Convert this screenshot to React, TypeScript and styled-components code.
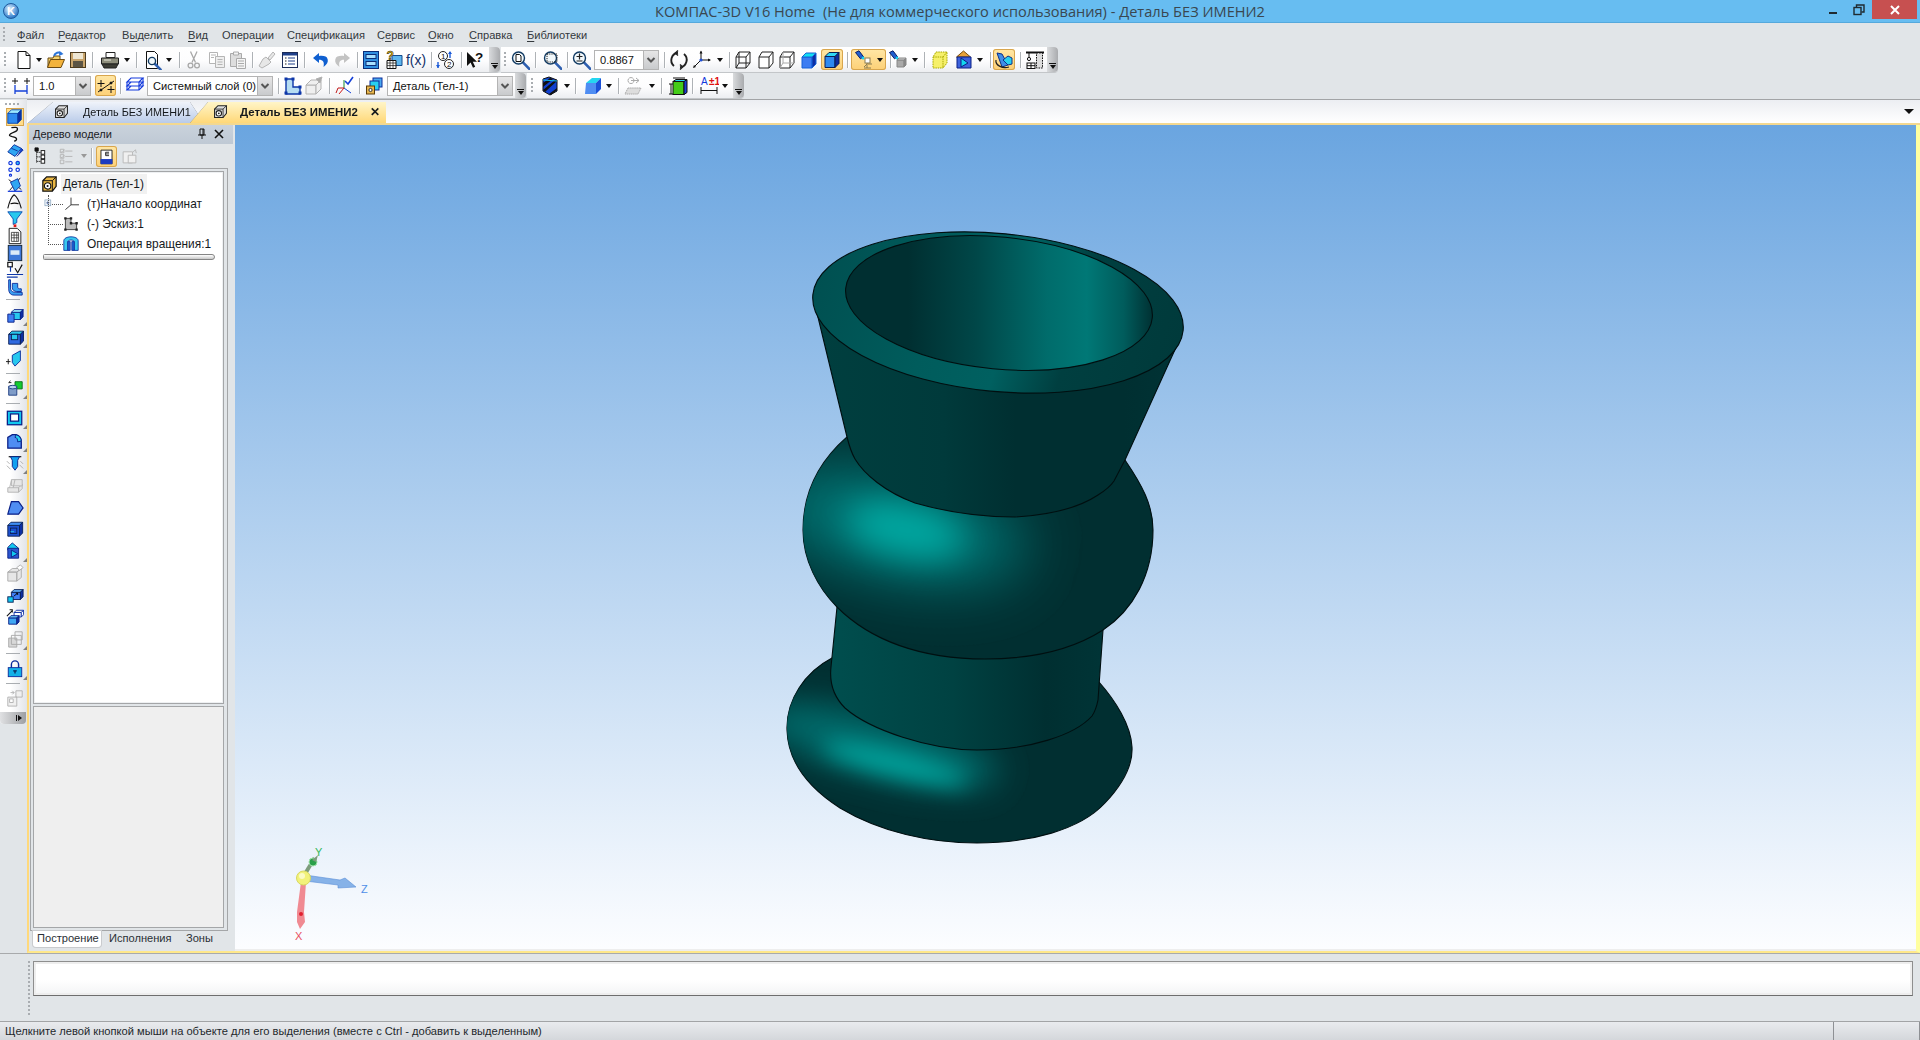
import React from "react";
import styled, { createGlobalStyle } from "styled-components";

const Global = createGlobalStyle`
  html, body { margin: 0; padding: 0; width: 1920px; height: 1040px; overflow: hidden; background: #e1e5e8; }
  body { font-family: "Liberation Sans", Arial, sans-serif; color: #1a1a1a; }
  * { box-sizing: border-box; }
`;

const cube = (x: number, y: number, w: number, h: number, d: number, f: string, t: string, s: string, st = "#000") => (
  <g stroke={st} strokeWidth="1" strokeLinejoin="round">
    <path d={`M${x} ${y}h${w}v${h}h${-w}z`} fill={f} />
    <path d={`M${x} ${y}l${d} ${-d}h${w}l${-d} ${d}z`} fill={t} />
    <path d={`M${x + w} ${y}l${d} ${-d}v${h}l${-d} ${d}z`} fill={s} />
  </g>
);
const lens = (cx: number, cy: number, r: number) => (
  <g>
    <path d={`M${cx + r * 0.7} ${cy + r * 0.7}L${cx + r + 5} ${cy + r + 5}`} stroke="#2e5fb0" strokeWidth="2.6" strokeLinecap="round" />
    <circle cx={cx} cy={cy} r={r} fill="#f2f8fb" stroke="#123b63" strokeWidth="1.4" />
  </g>
);

const icons: Record<string, React.ReactNode> = {
  doc: <path d="M4 1.5h8l4 4v13H4z M12 1.5v4h4" fill="#fff" stroke="#111" strokeWidth="1" />,
  open: <g stroke="#6b4a12"><path d="M2 8h5l1-2h6v4H5L2 17z" fill="#f6d36c" /><path d="M4.5 9.5h14l-3.5 8H1.5z" fill="#f3b33c" /><path d="M8 6C9 2.5 13 1.5 15 3.5" fill="none" stroke="#2b74d8" strokeWidth="2" /><path d="M13.5 1l4 3-4.5 2z" fill="#2b74d8" stroke="none" /></g>,
  save: <g><rect x="2.5" y="2.5" width="15" height="15" fill="#c9a56d" stroke="#4d3c1f" /><rect x="5" y="3" width="10" height="6" fill="#efe7d3" /><rect x="5" y="11" width="10" height="6" fill="#5b5444" /></g>,
  print: <g stroke="#222"><path d="M6 2.5h9v5H6z" fill="#fff" /><path d="M1.5 8h17v6h-17z" fill="#8d8d7c" /><path d="M2 14h16l-2 4H4z" fill="#3d3d36" /><path d="M4 10h7" stroke="#e7e7da" /></g>,
  preview: <g><path d="M3.5 1.5h8l3 3v14h-11z" fill="#fff" stroke="#111" />{lens(9, 11, 3.6)}</g>,
  cut: <g fill="none" stroke="#a8a8a8" strokeWidth="1.3"><path d="M6.5 1.5l5 11M13 1.5l-5 11" /><circle cx="6.5" cy="15.5" r="2.4" /><circle cx="13" cy="15.5" r="2.4" /></g>,
  copy: <g fill="#fff" stroke="#b5b5b5"><path d="M2.5 2.5h8v11h-8z" /><path d="M8.5 6.5h9v11h-9z" fill="#eee" /><path d="M10.5 9.5h5M10.5 12h5M10.5 14.5h5M4 5h5M4 7.5h3" /></g>,
  paste: <g stroke="#aaa"><path d="M2.5 3.5h11v13h-11z" fill="#ddd" /><path d="M5.5 2h5v3h-5z" fill="#f3f3f3" /><path d="M8.5 8.5h9v10h-9z" fill="#f4f4f4" /><path d="M10 11h6M10 13.5h6M10 16h6" /></g>,
  brush: <g stroke="#b5b5b5" fill="#e7e7e7"><path d="M11 8l5-6 2 2-5 6z" /><path d="M9 7l5 5-2 2-7 4-3-2 4-7z" /></g>,
  list: <g><rect x="2.5" y="2.5" width="15" height="15" fill="#fff" stroke="#1c2c58" /><rect x="3" y="3" width="14" height="2.5" fill="#1e3f8a" /><path d="M5 8h1.5M5 11h1.5M5 14h1.5" stroke="#222" /><path d="M8 8h7M8 11h7M8 14h7" stroke="#1e3f8a" /></g>,
  undo: <g><path d="M8 3l-6 5 6 5V9.8c4 0 5.6 2 4.5 7.2 3.6-2.6 4.8-5 4.2-7.5C16 6 12.4 5.6 8 6z" fill="#0f5fd0" /></g>,
  redo: <g transform="matrix(-1 0 0 1 20 0)"><path d="M8 3l-6 5 6 5V9.8c4 0 5.6 2 4.5 7.2 3.6-2.6 4.8-5 4.2-7.5C16 6 12.4 5.6 8 6z" fill="#c3c3c3" /></g>,
  mgr: <g stroke="#0b2c78"><rect x="2.5" y="1.5" width="15" height="17" fill="#2f8ee0" /><rect x="5" y="4.5" width="10" height="4" fill="#a8e0ff" /><rect x="5" y="11.5" width="10" height="4" fill="#a8e0ff" /></g>,
  lib: <g><path d="M8 5.5h10v10H8z" fill="#5fb6ee" stroke="#124a8c" /><path d="M3 10.5h9v8H3z" fill="#fff" stroke="#111" /><path d="M3 13h9M3 15.6h9M6 10.5v8M9 10.5v8" stroke="#111" strokeWidth=".7" /><text x="2.5" y="10" fontFamily="Liberation Sans" fontWeight="700" fontSize="12" fill="#f2c200" stroke="#222" strokeWidth=".5">?</text></g>,
  fx: <text x="0" y="15" fontFamily="Liberation Sans" fontSize="14.5" textLength="20" lengthAdjust="spacingAndGlyphs" fill="#123068">f(x)</text>,
  num: <g fontFamily="Liberation Sans" fontSize="8" fill="#111"><circle cx="7" cy="6" r="4.5" fill="#fff" stroke="#222" /><circle cx="13" cy="14" r="4.5" fill="#fff" stroke="#222" /><text x="5" y="9">1</text><text x="11" y="17">2</text><path d="M14 2v6M2 12v6" stroke="#1c5bd8" strokeWidth="1.4" /><path d="M12 4l2-3 2 3zM0 15l2 3 2-3z" fill="#1c5bd8" /></g>,
  help: <g><path d="M2 2v14l3.6-3.4 2.4 5.2 2.2-1-2.4-5H12z" fill="#111" /><text x="10" y="11.5" fontFamily="Liberation Sans" fontWeight="700" fontSize="13.5" fill="#111">?</text></g>,
  zoomPage: <g>{lens(8.5, 8, 6)}<path d="M6 4.5h3.5l1.5 1.5v5.5H6z" fill="#fff" stroke="#111" /></g>,
  zoomBox: <g>{lens(8.5, 8, 6)}<rect x="5" y="4" width="10" height="8" fill="none" stroke="#222" strokeDasharray="1.2 1" /></g>,
  zoomIn: <g>{lens(8.5, 8, 6)}<path d="M5.5 6.5h6M8.5 3.5v6M5.5 11h6" stroke="#222" strokeWidth="1.2" /></g>,
  rotate: <g fill="none" stroke="#222" strokeWidth="1.9"><path d="M9 2.8A7.5 7.5 0 0 0 5 16" /><path d="M11 17.2A7.5 7.5 0 0 0 15 4" /><path d="M9 .6l-2.6 2.4L9 5.4M11 19.4l2.6-2.4L11 14.6" strokeWidth="1.4" /></g>,
  orient: <g stroke="#111" fill="#111"><path d="M9 10V1.5M9 10h9M9 10l-7 7" fill="none" /><path d="M7.5 3.5L9 .5l1.5 3zM16 8.5l3 1.5-3 1.5zM1 18l1-3 2 2z" stroke="none" /><circle cx="9" cy="10" r="1.6" fill="#1c4ed8" stroke="none" /></g>,
  wire: <g fill="none" stroke="#222"><path d="M6 2h11v11l-4 5H3V7z" /><path d="M3 7h10v11M13 7l4-5" /><path d="M6 2v11l-3 5M6 13h11" /></g>,
  hidden: <g fill="#fff" stroke="#222"><path d="M6 2h11v11l-4 5H3V7z" /><path d="M3 7h10v11M13 7l4-5" fill="none" /></g>,
  thin: <g fill="#fff" stroke="#222"><path d="M6 2h11v11l-4 5H3V7z" /><path d="M3 7h10v11M13 7l4-5" fill="none" /><path d="M6 2v11l-3 5M6 13h11" fill="none" stroke="#aaa" /></g>,
  solid: cube(3, 7, 10, 11, 4, "#3d7df2", "#13e0f2", "#0d2fa5", "#1763d8"),
  shaded: cube(3, 6.5, 10, 11, 4, "#2f8af0", "#30d8f5", "#0e2ca0", "#0a1f55"),
  lamp: <g><path d="M1.5 2.5L5 .8l4.5 6-3 2z" fill="#1f5fd0" stroke="#0c1f66" /><circle cx="9" cy="8" r="1.5" fill="#16d0f0" /><path d="M10 17l3-3v-3M13 14l5 0M13 15v3M10 18h7" stroke="#8b7d52" fill="none" /><rect x="11" y="8" width="5" height="5" fill="#fff" stroke="#8b7d52" /></g>,
  lamp2: <g><path d="M1.5 2.5L5 .8l4.5 6-3 2z" fill="#1f5fd0" stroke="#0c1f66" /><circle cx="9" cy="8" r="1.5" fill="#16d0f0" />{cube(9, 10, 7, 7, 2, "#aaa", "#ccc", "#888", "#888")}</g>,
  ybox: <g fill="#f6f06a" stroke="#a8a800" strokeDasharray="1.5 .8"><path d="M6 2h11v11l-4 5H3V7z" /><path d="M3 7h10v11M13 7l4-5" fill="none" /></g>,
  section: <g><path d="M9.5 1l7 6H2.5z" fill="#e8a33a" stroke="#7a4d0a" /><path d="M3 7h14v11H3z" fill="#3c62dd" stroke="#0a1f86" /><path d="M7 8l7 5-7 4z" fill="#12d6ef" stroke="#0a1f86" /></g>,
  shadow: <g><path d="M3 3l5 1 6 11-6 2z" fill="#3f8de8" stroke="#0c2f8a" /><path d="M9 10l5-4 4 2v6l-4 1z" fill="#28d0f0" stroke="#0c2f8a" /><path d="M2 10c-1 5 6 9 13 7" fill="none" stroke="#222" strokeWidth="1.2" /></g>,
  crane: <g stroke="#111" fill="none"><path d="M1 2.5h18" strokeWidth="2" /><path d="M11.5 3h6v15h-6z" fill="#ddd" strokeDasharray="1.6 1" /><path d="M4 3v4" /><circle cx="4" cy="9" r="1.6" /><rect x="2" y="13" width="8" height="5.5" fill="#fff" /><path d="M2 15.7h8M6 13v5.5" /></g>,
  dims: <g stroke="#111"><path d="M4 2v6M1 5h6M16 2v6M13 5h6" /><path d="M4 9v9M16 9v9M4 15h12" stroke="#1440d8" strokeWidth="1.3" /></g>,
  snap: <g stroke="#111"><path d="M2 16L18 5" /><path d="M5 4v7M1.5 7.5h7M15 10v7M11.5 13.5h7" /><circle cx="5" cy="14" r="1" fill="#111" /><circle cx="15" cy="7" r="1" fill="#111" /></g>,
  layers: <g fill="none" stroke="#1238dc" strokeWidth="1.1"><path d="M6 2h12l-4 4H2zM6 6h12l-4 4H2zM6 10h12l-4 4H2z" /><path d="M2 6v8M14 6v8M18 2v8" /></g>,
  sketch: <g><path d="M3 3h7v8h7v7H3z" fill="#b6ddf2" stroke="#0d36a8" strokeWidth="1.4" /><path d="M1.5 1.5h3v3h-3zM8.5 1.5h3v3h-3zM1.5 15.5h3v3h-3zM15.5 15.5h3v3h-3zM15.5 9.5h3v3h-3z" fill="#0d36a8" /></g>,
  partG: <g stroke="#b2b2b2" fill="#efefef"><path d="M2 9h10v9H2z" /><path d="M2 9l5-5h10l-5 5zM12 9l5-5v9l-5 5z" /><path d="M12 3l6-2-2 6z" fill="#aaa" /></g>,
  axes: <g fill="none"><path d="M9 12V4" stroke="#188a2a" /><path d="M9 12H3l-2 5" stroke="#c01818" /><path d="M9 12l7 5" stroke="#1440d8" /><path d="M9 12l-5 6" stroke="#d01818" /><path d="M10 5l3 3 5-7" stroke="#1440d8" strokeWidth="1.6" /></g>,
  parts: <g><rect x="8" y="2" width="9" height="9" fill="#4aa8f0" stroke="#0b2c9a" /><rect x="5" y="5" width="9" height="9" fill="#28d0f0" stroke="#0b2c9a" /><rect x="1.5" y="10" width="8" height="8" fill="#e7b650" stroke="#5a3a06" /><circle cx="5.5" cy="14" r="1.6" fill="#fff" stroke="#333" /></g>,
  striped: <g><path d="M3 3l6-2 8 3v11l-7 4-7-4z" fill="#1040d0" stroke="#111" /><path d="M3 7l7-5 3 1-10 8zM3 14L15 4l2 1L5 16zM9 18l8-6v2l-6 5z" fill="#111" /><path d="M3 4l14 1" stroke="#18b8e8" /></g>,
  blueBox: <g><path d="M3 7l6-5h9l-5 5z" fill="#24d6f0" /><path d="M3 7h10v11H2z" fill="#4f8df2" /><path d="M13 7l5-5v11l-5 5z" fill="#1a50d8" /></g>,
  grayOp: <g stroke="#aaa" fill="none"><path d="M5 4.5a3 3 0 1 1 0 .1M8 4.5h8M13 2l3 2.5-3 2.5" /><path d="M5 12h13l-3 6H2z" fill="#ddd" strokeDasharray="1.5 .6" /></g>,
  green: <g><rect x="5" y="5.5" width="11" height="13" fill="#44cc18" stroke="#111" /><path d="M16 5.5l3-2v13l-3 2z" fill="#1c3dd8" stroke="#111" /><path d="M5 5.5l3-2h11l-3 2z" fill="#24d6f0" stroke="#111" /><path d="M5 2h12M1 8h4M1 18h4M3 8v10" stroke="#111" /></g>,
  adim: <g><text x="2" y="9" fontFamily="Liberation Sans" fontSize="10" fill="#1238dc">A</text><text x="10" y="9" fontFamily="Liberation Sans" fontSize="10" fontWeight="700" fill="#e01010">±1</text><path d="M2 11v7M18 11v7M2 14.5h16" stroke="#111" /></g>,
  part: <g><path d="M3 6l4-4h10v10l-4 5H3z" fill="#e9b642" stroke="#111" strokeWidth="1.3" /><path d="M3 6h10v11" fill="none" stroke="#111" /><path d="M13 6l4-4" stroke="#111" /><circle cx="8" cy="11.5" r="3.4" fill="#fff" stroke="#111" strokeWidth="1.2" /><circle cx="8" cy="11.5" r="1.1" fill="#111" /></g>,
  partBw: <g><path d="M3 6l4-4h10v9l-4 5H3z" fill="#ddd" stroke="#222" strokeWidth="1.2" /><path d="M3 6h10v10M13 6l4-4" fill="none" stroke="#222" /><circle cx="8" cy="11" r="3.2" fill="#fff" stroke="#222" strokeWidth="1.3" /><circle cx="8" cy="11" r="1.1" fill="#222" /></g>,
  tree: <g stroke="#111" fill="none"><path d="M4 1.5v16M4 6h5M4 11h5M4 16h5" strokeDasharray="1.4 .8" /><path d="M2.2 1h3.6v3.6H2.2z" fill="#111" /><rect x="9" y="4" width="4" height="4" fill="#fff" /><rect x="9" y="9" width="4" height="4" fill="#fff" /><rect x="9" y="14" width="4" height="4" fill="#fff" /></g>,
  checks: <g stroke="#b3b3b3" fill="none"><path d="M2.5 2.5h4v4h-4zM2.5 8.5h4v4h-4zM2.5 14.5h4v4h-4z" /><path d="M8 4.5h8M8 10.5h8M8 16.5h8" /><path d="M3 5l1.5 1L7 3M3 11l1.5 1L7 9" /></g>,
  bookA: <g><path d="M3.5 2.5h13v16h-13z" fill="#fff" stroke="#111" /><path d="M3 13h14v6H3z" fill="#1c3cc0" /><path d="M9 5v4M9 5h4M9 7h4M9 9h4" stroke="#111" /></g>,
  bookB: <g stroke="#b3b3b3" fill="#f0f0f0"><path d="M2.5 4.5h11v13h-11z" /><path d="M8.5 8.5h9v9h-9z" /><path d="M14 5l3-3 1 4" fill="none" /></g>,
  sSquiggle: <path d="M6 3c9-2 8 3 3 5-7 3-6 4-2 5 6 1 6 4 2 5" fill="none" stroke="#111" strokeWidth="1.4" />,
  sDiamond: <g><path d="M2 11l7-8 8 4-7 9z" fill="#2fa6f2" stroke="#0a2a9a" /><path d="M6 7l7 3" stroke="#0a2a9a" /><path d="M17 7l2 2-7 7" fill="#1840c8" stroke="#0a2a9a" /></g>,
  sDots: <g fill="#fff" stroke="#1238dc" strokeWidth="1.3"><circle cx="5" cy="4.5" r="1.9" /><circle cx="13" cy="4.5" r="1.9" fill="#28c8ee" /><circle cx="5" cy="12" r="1.9" /><circle cx="13" cy="12" r="1.9" /><circle cx="5" cy="18" r="1.2" /></g>,
  sPlane: <g><path d="M3 4l14 11M16 2l-12 14" stroke="#111" /><path d="M5 7l8-4 3 8-6 6z" fill="#2fa6f2" stroke="#0a2a9a" /><path d="M2 17h16" stroke="#1238dc" strokeWidth="1.4" /></g>,
  sVee: <path d="M2 17c2-8 4-13 7-15 3 2 6 8 8 15M5 12c3-1 6-1 9 0" fill="none" stroke="#111" strokeWidth="1.2" />,
  sFunnel: <g><path d="M2 2h16l-6 8v4l-4 2V10z" fill="#28c8ee" stroke="#0a4ab0" /><rect x="8.5" y="16" width="3" height="3" fill="#e01818" /></g>,
  sGrid: <g><path d="M3.5 1.5h9l4 4v13h-13z" fill="#fff" stroke="#111" /><path d="M6 6h8v10H6zM6 9h8M6 12h8M9 6v10M12 6v10" fill="none" stroke="#222" strokeWidth=".8" /></g>,
  sWin: <g><rect x="2.5" y="1.5" width="15" height="17" fill="#3d78d8" stroke="#123" /><rect x="5" y="7" width="10" height="5" fill="#dceaf8" /></g>,
  sPlot: <g stroke="#0d36a8" fill="none" strokeWidth="1.3"><rect x="2" y="1.5" width="5" height="5" fill="#fff" stroke="#111" /><path d="M5 6v6M1 15h18M1 18h12" /><path d="M10 8l3 5 5-9" stroke="#111" /></g>,
  sCurve: <path d="M5 2v9c0 4 3 5 7 5h6v3H9c-5 0-6-4-6-7V2zM7 6h6v4c0 1 1 2 2 2h2v3h-5c-3 0-5-2-5-4z" fill="#3aa0f2" stroke="#0a2a9a" />,
  sBoss: <g>{cube(6, 7, 10, 8, 3, "#28c8ee", "#9cecff", "#0d2fa5", "#0a1f86")}<path d="M2 9h7v9H2z" fill="#3f7df2" stroke="#0a1f86" /></g>,
  sCut: <g>{cube(3, 7, 13, 11, 3.5, "#2f6ae0", "#28c8ee", "#0d2fa5", "#0a1f55")}<rect x="6" y="7" width="7" height="6" fill="#28c8ee" stroke="#0a1f55" /></g>,
  sLoft: <g><path d="M0 14h5M2.5 11v6" stroke="#111" /><path d="M7 7l9-5v11l-6 6-3-4z" fill="#28c8ee" stroke="#0a2a9a" /></g>,
  sCyl: <g><path d="M10 3h8v8h-8z" fill="#12cc30" stroke="#0a6a1a" /><path d="M3 8h9v10H3z" fill="#7f9cc8" stroke="#1c3c80" /><ellipse cx="7.5" cy="9" rx="4.5" ry="2" fill="#b8d0ee" stroke="#1c3c80" /><path d="M3 4l2-2M3 4h3" stroke="#111" /></g>,
  sPocket: <g><rect x="1.5" y="2.5" width="16" height="15" fill="#12c8ee" stroke="#0a1f86" strokeWidth="1.4" /><rect x="5" y="5.5" width="9" height="8" fill="#fff" stroke="#0a1f86" strokeWidth="1.4" /></g>,
  sFillet: <g><path d="M2 18V6l5-3h4c4 1 6 4 6 8v7z" fill="#4f8df2" stroke="#0a1f86" strokeWidth="1.4" /><path d="M11 3c4 1 6 4 6 7l-4 1c0-3-1-5-3-5z" fill="#28d0f0" stroke="#0a1f86" /></g>,
  sHole: <g><path d="M3 3h14" stroke="#111" strokeWidth="1.3" /><path d="M5 3h10l-2 4v7l-3 4-3-4V7z" fill="#12a0f0" stroke="#0a1f86" /><path d="M1 8l3 3M1 13l4 4M16 8l3 3M15 12l4 4" stroke="#aaa" /></g>,
  sGrayRib: <g stroke="#b2b2b2" fill="#e6e6e6"><path d="M2 13h12v5H2zM14 13l4-4v5l-4 4z" /><path d="M6 4h12v7H6zM6 5l-2 8M10 4l-2 9" /></g>,
  sTaper: <path d="M2 18L6 4h8l5 7-5 7z" fill="#4f8df2" stroke="#0a1f86" strokeWidth="1.3" />,
  sShell: <g>{cube(2, 6, 13, 12, 3.5, "#1b50d0", "#3f8df2", "#0d2fa5", "#0a1f55")}<rect x="5" y="9" width="7" height="6" fill="#1b50d0" stroke="#0a1f55" /><path d="M5 13h4" stroke="#28c8ee" /></g>,
  sDraft: <g><path d="M7 1l7 6-1 2H2V6z" fill="#12c8ee" stroke="#0a1f86" /><path d="M2 7h12v11H2z" fill="#2b56d0" stroke="#0a1f86" /><path d="M6 9l7 4-7 4z" fill="#12c8ee" stroke="#0a1f86" /></g>,
  sGrayCube: <g stroke="#aaa" fill="#e6e6e6"><path d="M2 9h10v10H2zM2 9l5-4h10l-5 4zM12 9l5-4v10l-5 4z" /><path d="M12 4l4-3 3 3-4 3z" fill="#fff" /></g>,
  sScale: <g>{cube(6, 7, 10, 8, 3, "#3f7df2", "#5fb0f8", "#0d2fa5", "#0a1f55")}<rect x="2" y="12" width="6" height="6" fill="#12c8ee" stroke="#0a1f55" /><path d="M9 11l4-3M11 8h2v2" stroke="#000" fill="none" /></g>,
  sMove: <g>{cube(9, 5, 8, 5, 2.5, "#fff", "#eee", "#fff", "#0d2fa5")}{cube(3, 11, 9, 7, 2.5, "#3fa6f2", "#6fc8f8", "#0d2fa5", "#0a1f86")}<path d="M1 9l6-6M4 2h3v3" stroke="#111" fill="none" strokeWidth="1.2" /></g>,
  sGrayArr: <g stroke="#a8a8a8" fill="#d8d8d8"><path d="M3 9h9v10H3z" /><path d="M6 6h11v10H6z" fill="none" /><path d="M10 2h8v9h-8z" fill="none" /></g>,
  sLock: <g><path d="M6 9V5a4 4 0 0 1 8 0v4" fill="none" stroke="#0a2a9a" strokeWidth="1.6" /><rect x="2.5" y="8.5" width="15" height="10" fill="#12b0e8" stroke="#0a2a9a" /><path d="M8 12h4M10 12v3" stroke="#0a1f55" strokeWidth="1.4" /></g>,
  sParts: <g stroke="#b0b0b0" fill="#f0f0f0"><path d="M2 9h10v10H2zM11 2h7v7h-7z" /><path d="M4 11h4v4H4z" fill="#fff" /><path d="M5 4h4M7 2l2 2-2 2" fill="none" /></g>,
  box3d: cube(2, 6, 11, 11, 4, "#2f8af0", "#9ce8ff", "#0e2ca0", "#0a4ab0"),
  plusBox: <g><rect x="4.5" y="4.5" width="9" height="9" fill="#f2f6fb" stroke="#7f9db9" /><path d="M6.5 9h5M9 6.5v5" stroke="#1c3c80" /></g>,
  axisTree: <g stroke="#111" fill="none"><path d="M10 2v9M10 11h10M10 11l-7 6" /></g>,
  sketchG: <g><path d="M3 3h7v6h7v8H3z" fill="#bdbdbd" stroke="#222" /><path d="M1.5 1.5h3v3h-3zM8.5 1.5h3v3h-3zM1.5 15.5h3v3h-3zM15.5 15.5h3v3h-3zM15.5 7.5h3v3h-3zM8.5 7.5h3v3h-3z" fill="#222" /></g>,
  revolve: <g><path d="M1 18V6c0-3 4-5 9-5s9 2 9 5v12h-5V7c0-1-2-2-4-2S6 6 6 7v11z" fill="#38c8ee" stroke="#0a2a9a" /><path d="M6 18V7h3v11zM11 18V7h3v11z" fill="#1d6ad8" stroke="#0a2a9a" /></g>,
};

const IconSvg = styled.svg`
  display: block; flex: none;
`;
const Icon = ({ n, s = 20 }: { n: string; s?: number }) => (
  <IconSvg width={s} height={s} viewBox="0 0 20 20">{icons[n]}</IconSvg>
);

const Page = styled.div`
  width: 1920px; height: 1040px; display: flex; flex-direction: column; background: #e1e5e8; overflow: hidden;
`;
const TitleBar = styled.div`
  height: 23px; flex: none; background: #67bdf1; border-bottom: 1px solid #55a9dc; display: flex; align-items: flex-start; position: relative;
`;
const TitleText = styled.div`
  position: absolute; left: 0; right: 0; top: 0; height: 22px; line-height: 22px; text-align: center; white-space: pre;
  font-family: "Open Sans", sans-serif; font-size: 14.6px; color: #3a4750;
`;
const Logo = styled.div`
  margin: 3px 0 0 3px; width: 16px; height: 16px; border-radius: 50%; background: radial-gradient(circle at 40% 35%, #dff1ff, #2b78c8 75%);
  border: 1px solid #1e5b9e; color: #fff; font: 700 11px/14px "Liberation Sans", sans-serif; text-align: center;
`;
const WinButtons = styled.div`
  margin-left: auto; display: flex; height: 19px; margin-right: 3px; position: relative;
`;
const WinBtn = styled.div<{ $w: number; $red?: boolean }>`
  width: ${(p) => p.$w}px; height: 19px; display: flex; align-items: center; justify-content: center;
  background: ${(p) => (p.$red ? "#c75050" : "transparent")};
`;
const MenuBar = styled.div`
  height: 24px; flex: none; display: flex; align-items: center; padding: 0 0 1px 3px; font-size: 11.1px; color: #33393d;
`;
const Grip = styled.div<{ $h?: number }>`
  width: 2px; height: ${(p) => p.$h ?? 16}px; flex: none;
  background: repeating-linear-gradient(#a9adb1 0 2px, transparent 2px 4px);
`;
const MenuItem = styled.div<{ $w: number }>`
  width: ${(p) => p.$w}px; flex: none; white-space: nowrap;
  u { text-decoration-thickness: 1px; text-underline-offset: 2px; }
`;
const ToolRow = styled.div`
  height: 26px; flex: none; display: flex; align-items: stretch; padding-bottom: 1px;
`;
const ToolBand = styled.div<{ $w: number; $gap?: number }>`
  width: ${(p) => p.$w}px; margin-left: ${(p) => p.$gap ?? 0}px; flex: none; display: flex; align-items: center; position: relative;
  background: linear-gradient(#fff 0%, #fdfdfe 55%, #eceef1 100%);
  border-radius: 0 4px 4px 0; box-shadow: 0 1px 0 #c3c6c9; 
`;
const ToolSlot = styled.div<{ $w: number; $ml: number; $on?: boolean }>`
  width: ${(p) => p.$w}px; margin-left: ${(p) => p.$ml}px; height: 21px; flex: none; display: flex; align-items: center; justify-content: center; gap: 3px;
  border-radius: 3px;
  ${(p) => (p.$on ? "background: linear-gradient(#ffe7a6, #fdd076); box-shadow: inset 0 0 0 1px #d8a64e;" : "")}
`;
const Sep = styled.div`
  width: 1px; height: 16px; background: #aeb2b6; box-shadow: 1px 0 0 #fff;
`;
const DropArrow = styled.div<{ $c?: string }>`
  width: 0; height: 0; border-left: 3.5px solid transparent; border-right: 3.5px solid transparent; border-top: 4px solid ${(p) => p.$c ?? "#111"};
`;
const EndHandle = styled.div`
  position: absolute; right: 0; top: 0; bottom: 0; width: 11px; border-radius: 0 4px 4px 0;
  background: linear-gradient(90deg, #d9dbdd, #a9abae); display: flex; flex-direction: column; align-items: center; justify-content: flex-end; padding-bottom: 3px;
  &::before { content: ""; width: 7px; height: 1px; background: #111; margin-bottom: 1px; }
  &::after { content: ""; border-left: 3.5px solid transparent; border-right: 3.5px solid transparent; border-top: 4px solid #111; }
`;
const Combo = styled.div<{ $w: number; $ml: number }>`
  width: ${(p) => p.$w}px; margin-left: ${(p) => p.$ml}px; height: 20px; flex: none; background: #fff; border: 1px solid #b4b4b4;
  display: flex; align-items: center; justify-content: space-between; padding-left: 5px; font-size: 11.1px; color: #111; white-space: nowrap;
`;
const ComboBtn = styled.div`
  width: 15px; height: 18px; background: linear-gradient(#e6e6e6, #c9cbcd); border-left: 1px solid #b4b4b4; display: flex; align-items: center; justify-content: center; flex: none;
`;
const Body = styled.div`
  display: flex; height: 854px; flex: none;
`;
const SideBar = styled.div`
  width: 27px; flex: none; display: flex; flex-direction: column;
`;
const SideBand = styled.div`
  width: 26px; height: 624px; margin-top: 1px; display: flex; flex-direction: column; align-items: center;
  background: linear-gradient(90deg, #fff 40%, #e4e6ea 100%); border-radius: 0 0 4px 4px; position: relative; padding-top: 3px;
`;
const SideSlot = styled.div<{ $mt: number; $on?: boolean }>`
  margin-top: ${(p) => p.$mt}px; margin-left: 3px; width: 18px; height: 18px; flex: none; display: flex; align-items: center; justify-content: center; position: relative;
  ${(p) => (p.$on ? "background: #ffdd8a; box-shadow: inset 0 0 0 1px #d8a64e;" : "")}
`;
const Corner = styled.div`
  position: absolute; right: -3px; bottom: -2px; width: 0; height: 0; border-left: 4px solid transparent; border-bottom: 4px solid #808080;
`;
const SideSep = styled.div<{ $mt: number }>`
  margin-top: ${(p) => p.$mt}px; width: 14px; height: 1px; background: #a9adb1; flex: none;
`;
const SideGrip = styled.div`
  width: 16px; height: 2px; flex: none; background: repeating-linear-gradient(90deg, #a9adb1 0 2px, transparent 2px 4px);
`;
const SideEnd = styled.div`
  position: absolute; left: 0; right: 0; bottom: 0; height: 12px; border-radius: 0 0 4px 4px; background: linear-gradient(90deg, #e0e1e3, #9d9fa2);
  display: flex; align-items: center; justify-content: flex-end; gap: 1px; padding-right: 4px;
  &::before { content: ""; width: 1px; height: 6px; background: #111; }
  &::after { content: ""; border-top: 3.5px solid transparent; border-bottom: 3.5px solid transparent; border-left: 4px solid #111; }
`;
const Workspace = styled.div`
  flex: 1; min-width: 0; display: flex; flex-direction: column;
`;
const TabBar = styled.div`
  height: 26px; flex: none; border-top: 1px solid #a2a4a6; border-bottom: 2px solid #f3d890; background: linear-gradient(#eceef2, #fff);
  display: flex; align-items: flex-end; padding-left: 1px; position: relative;
`;
const TabEdge = styled.div<{ $ml: number }>`
  margin-left: ${(p) => p.$ml}px; filter: drop-shadow(0 0 0.6px #5f6468); flex: none; position: relative;
`;
const TabShape = styled.div<{ $active?: boolean; $w: number; $slant: number; $rs: number }>`
  width: ${(p) => p.$w}px; height: 21px; display: flex; align-items: center; padding-bottom: 1px;
  clip-path: polygon(0 100%, ${(p) => p.$slant}px 0, calc(100% - ${(p) => p.$rs}px) 0, 100% ${(p) => (p.$rs ? "100%" : "3px")}, 100% 100%);
  background: ${(p) => (p.$active ? "linear-gradient(#fff5c8, #ffd878)" : "linear-gradient(#eff3fa, #b9cbe9)")};
  font-size: ${(p) => (p.$active ? 11.4 : 10.8)}px; white-space: nowrap; color: #14181c;
  font-weight: ${(p) => (p.$active ? 700 : 400)};
`;
const TabIcon = styled.div<{ $ml: number; $mr: number }>`
  margin-left: ${(p) => p.$ml}px; margin-right: ${(p) => p.$mr}px; flex: none;
`;
const TabClose = styled.div`
  margin-left: 12px; font-size: 12px; font-weight: 700; line-height: 1;
`;
const TabMenu = styled.div`
  position: absolute; right: 6px; top: 9px; border-left: 5px solid transparent; border-right: 5px solid transparent; border-top: 5px solid #111;
`;
const Frame = styled.div`
  flex: 1; min-height: 0; display: flex; border-left: 2px solid #ffd97c; border-bottom: 2px solid #ffe88a; border-right: 4px solid #ffffa0;
`;
const Panel = styled.div`
  width: 204px; flex: none; display: flex; flex-direction: column; margin-right: 2px;
`;
const PanelHead = styled.div`
  height: 19px; flex: none; background: linear-gradient(#c9d2dc, #bfc9d4); display: flex; align-items: center; padding: 0 0 2px 4px; font-size: 11px; color: #1c2226;
`;
const PanelHeadIcons = styled.div`
  margin-left: auto; display: flex; gap: 7px; padding-right: 9px; align-items: center;
`;
const PanelTools = styled.div`
  height: 24px; flex: none; display: flex; align-items: center;
`;
const PanelBox = styled.div`
  flex: 1; min-height: 0; margin: 0 5px 0 1px; border: 1px solid #a4a6a8; padding: 2px 3px 2px 2px; display: flex; flex-direction: column; gap: 2px;
`;
const TreeBox = styled.div`
  height: 533px; flex: none; border: 1px solid #a4a6a8; background: #fff; padding: 2px 0 0 6px; box-shadow: inset 0 0 0 1px #eef0f2;
  display: flex; flex-direction: column;
`;
const InfoBox = styled.div`
  flex: 1; border: 1px solid #a4a6a8; background: #efefef;
`;
const TreeRow = styled.div<{ $pad: number }>`
  height: 20px; display: flex; align-items: center; padding-left: ${(p) => p.$pad}px; font-size: 11.9px; color: #15191c; white-space: nowrap; position: relative;
`;
const RootLabel = styled.span`
  background: #f1f1f1; height: 20px; line-height: 20px; padding: 0 3px 0 2px; margin-left: 2px;
`;
const TreeLabel = styled.span`
  margin-left: 8px;
`;
const Dots = styled.div<{ $h: number }>`
  position: absolute; left: 8px; bottom: 9px; width: 15px; height: ${(p) => p.$h}px; border-left: 1px dotted #555; border-bottom: 1px dotted #555;
`;
const PlusAt = styled.div`
  position: absolute; left: 2px; top: 3px;
`;
const Rollback = styled.div`
  height: 6px; width: 172px; margin: 0 0 0 3px; border: 1px solid #858585; border-radius: 3px 6px 6px 3px; background: linear-gradient(#fff, #c9c9c9);
`;
const PanelTabs = styled.div`
  height: 20px; flex: none; display: flex; align-items: flex-start; padding-left: 4px; font-size: 11.1px; color: #2a3035;
`;
const PanelTab = styled.div<{ $on?: boolean; $w: number; $pl: number }>`
  width: ${(p) => p.$w}px; height: 16px; line-height: 15px; padding-left: ${(p) => p.$pl}px; flex: none; white-space: nowrap;
  ${(p) => (p.$on ? "background: #fff; border-radius: 0 0 3px 3px; box-shadow: 0 0 0 1px #c9cbce;" : "")}
`;
const Viewport = styled.div`
  flex: 1; min-width: 0; position: relative; background: linear-gradient(#6aa5e0, #fcfdff); border-bottom: 2px solid #eeeeee; overflow: hidden;
`;
const Scene = styled.svg`
  position: absolute; left: 0; top: 0; display: block;
`;
const Bottom = styled.div`
  height: 68px; flex: none; display: flex; border-top: 1px solid #a8aaac; padding: 7px 7px 0 28px; gap: 3px;
`;
const CmdBox = styled.div`
  flex: 1; height: 35px; border: 1px solid #8e8e8e; border-bottom-color: #6e6e6e; background: linear-gradient(#fff 55%, #f3f4f5);
  box-shadow: inset 0 0 0 2px #eeeeee;
`;
const Status = styled.div`
  height: 19px; flex: none; border-top: 1px solid #a2a4a6; background: linear-gradient(#e9ebee, #d4d7db); display: flex; align-items: center; font-size: 11.15px; padding-left: 5px; color: #23282c;
`;
const StatusText = styled.div`
  width: 1828px; flex: none; white-space: nowrap;
`;
const StatusCell = styled.div`
  flex: 1; height: 100%; border-left: 1px solid #8e9094; border-right: 1px solid #8e9094;
`;

type Item = { n?: string; x: number; k?: "sep" | "arrow"; w?: number; on?: boolean; drop?: boolean };
const flow = (items: Item[], start: number) => {
  let right = start;
  return items.map((it, idx) => {
    const w = it.w ?? (it.k === "sep" ? 1 : it.k === "arrow" ? 9 : 20);
    const ml = it.x - w / 2 - right;
    right = it.x + w / 2;
    return (
      <ToolSlot key={idx} $w={w} $ml={ml} $on={it.on}>
        {it.k === "sep" ? <Sep /> : it.k === "arrow" ? <DropArrow /> : <Icon n={it.n!} s={it.drop ? 20 : it.w && it.w < 20 ? it.w : 20} />}
        {it.drop && <DropArrow />}
      </ToolSlot>
    );
  });
};
const s = (x: number): Item => ({ k: "sep", x });
const a = (x: number): Item => ({ k: "arrow", x });
const i = (n: string, x: number, on?: boolean): Item => ({ n, x, on });

const menu: [React.ReactNode, number][] = [
  [<><u>Ф</u>айл</>, 41],
  [<><u>Р</u>едактор</>, 64],
  [<>В<u>ы</u>делить</>, 66],
  [<><u>В</u>ид</>, 34],
  [<>Опера<u>ц</u>ии</>, 65],
  [<>С<u>п</u>ецификация</>, 90],
  [<>С<u>е</u>рвис</>, 51],
  [<><u>О</u>кно</>, 41],
  [<><u>С</u>правка</>, 58],
  [<><u>Б</u>иблиотеки</>, 70],
];

const side: { n?: string; c: number; sep?: boolean; corner?: boolean; on?: boolean }[] = [
  { n: "box3d", c: 117, on: true }, { n: "sSquiggle", c: 134 }, { n: "sDiamond", c: 151 }, { n: "sDots", c: 168 },
  { n: "sPlane", c: 185 }, { n: "sVee", c: 202 }, { n: "sFunnel", c: 219 }, { n: "sGrid", c: 236 }, { n: "sWin", c: 253 },
  { n: "sPlot", c: 270 }, { n: "sCurve", c: 287 }, { sep: true, c: 299 },
  { n: "sBoss", c: 315, corner: true }, { n: "sCut", c: 337, corner: true }, { n: "sLoft", c: 358 }, { sep: true, c: 373 },
  { n: "sCyl", c: 388, corner: true }, { sep: true, c: 403 },
  { n: "sPocket", c: 418, corner: true }, { n: "sFillet", c: 441, corner: true }, { n: "sHole", c: 463, corner: true },
  { n: "sGrayRib", c: 485 }, { n: "sTaper", c: 507 }, { n: "sShell", c: 529 }, { n: "sDraft", c: 551, corner: true },
  { n: "sGrayCube", c: 573 }, { n: "sScale", c: 595 }, { n: "sMove", c: 617 }, { n: "sGrayArr", c: 639, corner: true },
  { sep: true, c: 653 }, { n: "sLock", c: 669, corner: true }, { sep: true, c: 683 }, { n: "sParts", c: 698 },
];

const sideFlow = () => {
  let bottom = 105;
  return side.map((it, k) => {
    if (it.sep) {
      const mt = it.c - bottom;
      bottom = it.c + 1;
      return <SideSep key={k} $mt={mt} />;
    }
    const mt = it.c - 9 - bottom;
    bottom = it.c + 9;
    return (
      <SideSlot key={k} $mt={mt} $on={it.on}>
        <Icon n={it.n!} s={18} />
        {it.corner && <Corner />}
      </SideSlot>
    );
  });
};

const baseD = "M832 658C805 672 786 700 787 730C788 765 812 790 840 808C880 832 930 843 977 843C1030 843 1080 830 1105 803C1122 785 1133 765 1132 747C1131 725 1115 700 1099 682Z";
const sphereD = "M847 437C815 465 803 498 803 530C803 560 818 588 837 607C870 640 920 659 985 659C1035 659 1075 648 1103 630C1133 610 1153 575 1153 530C1153 505 1142 485 1125 460Z";

const Model = () => (
  <Scene width="1680" height="826" viewBox="235 125 1680 826">
    <defs>
      <filter id="b30" x="-60%" y="-80%" width="220%" height="260%"><feGaussianBlur stdDeviation="30" /></filter>
      <filter id="b18" x="-60%" y="-80%" width="220%" height="260%"><feGaussianBlur stdDeviation="17" /></filter>
      <filter id="b10" x="-60%" y="-100%" width="220%" height="300%"><feGaussianBlur stdDeviation="11" /></filter>
      <linearGradient id="cone" gradientUnits="userSpaceOnUse" x1="817" y1="0" x2="1178" y2="0">
        <stop offset="0" stopColor="#003f3f" /><stop offset=".35" stopColor="#003a3b" /><stop offset=".55" stopColor="#002f31" /><stop offset=".85" stopColor="#002f31" /><stop offset="1" stopColor="#003335" />
      </linearGradient>
      <linearGradient id="neck" gradientUnits="userSpaceOnUse" x1="831" y1="0" x2="1100" y2="0">
        <stop offset="0" stopColor="#004e4e" /><stop offset=".45" stopColor="#004242" /><stop offset=".8" stopColor="#002f31" /><stop offset="1" stopColor="#003436" />
      </linearGradient>
      <linearGradient id="rim" gradientUnits="userSpaceOnUse" x1="813" y1="250" x2="1183" y2="330">
        <stop offset="0" stopColor="#004f50" /><stop offset=".35" stopColor="#005c5c" /><stop offset=".55" stopColor="#006060" /><stop offset=".72" stopColor="#003f40" /><stop offset="1" stopColor="#003a3b" />
      </linearGradient>
      <linearGradient id="inner" gradientUnits="userSpaceOnUse" x1="846" y1="300" x2="1152" y2="270">
        <stop offset="0" stopColor="#002f31" /><stop offset=".2" stopColor="#002f31" /><stop offset=".42" stopColor="#004748" /><stop offset=".65" stopColor="#006c6b" /><stop offset=".78" stopColor="#007876" /><stop offset=".9" stopColor="#005c5c" /><stop offset="1" stopColor="#002e30" />
      </linearGradient>
      <clipPath id="baseClip"><path d={baseD} /></clipPath>
      <clipPath id="sphClip"><path d={sphereD} /></clipPath>
    </defs>
    <g stroke="#000f10" strokeWidth="1.1">
      <path d={baseD} fill="#012f31" />
      <g clipPath="url(#baseClip)" stroke="none">
        <ellipse cx="878" cy="745" rx="125" ry="30" transform="rotate(14 878 745)" fill="#006a6a" filter="url(#b18)" />
        <ellipse cx="895" cy="764" rx="75" ry="11" transform="rotate(14 895 764)" fill="#00aaa3" filter="url(#b10)" />
      </g>
      <path d="M837 607L831 667C829 685 835 698 845 708C870 730 930 750 977 750C1030 750 1075 735 1092 716C1096 710 1097 705 1098 700L1103 630Z" fill="url(#neck)" />
      <path d={sphereD} fill="#012f31" />
      <g clipPath="url(#sphClip)" stroke="none">
        <ellipse cx="895" cy="525" rx="135" ry="55" transform="rotate(12 895 525)" fill="#006f6f" filter="url(#b30)" />
        <ellipse cx="905" cy="530" rx="60" ry="26" transform="rotate(12 905 530)" fill="#00a9a2" filter="url(#b18)" />
      </g>
      <path d="M817 313L847 437C849 445 851 452 855 459C864 474 885 492 915 503C950 513 985 517 1015 517C1050 515 1080 507 1098 495C1106 490 1110 487 1114 481L1125 460L1178 343Z" fill="url(#cone)" />
      <ellipse cx="998" cy="312.5" rx="186" ry="79" transform="rotate(5.5 998 312.5)" fill="url(#rim)" />
      <ellipse cx="999" cy="303" rx="154" ry="66" transform="rotate(5.5 999 303)" fill="url(#inner)" />
    </g>
    <g>
      <path d="M302 875L313 857L316 859L305 878Z" fill="#7d9c7c" />
      <circle cx="313" cy="862" r="4" fill="#2aa04a" stroke="#9de0a8" />
      <path d="M312 860L318 855L316 862Z" fill="#7d9c7c" />
      <path d="M305 875L340 880L345 878L356 887L338 888L338 885L305 881Z" fill="#86b2e8" stroke="#5b8fd6" strokeWidth=".6" />
      <path d="M301 882L306 882L304 912L305 922L300 929L297 922L297 912Z" fill="#f08a92" />
      <circle cx="301" cy="914" r="2" fill="#e02030" />
      <circle cx="303.5" cy="878" r="7" fill="#f2f27a" stroke="#d8d860" />
      <circle cx="302" cy="876" r="3" fill="#fbfbc4" />
      <text x="315" y="856" fontFamily="Liberation Sans" fontSize="11" fill="#35b858">Y</text>
      <text x="361" y="893" fontFamily="Liberation Sans" fontSize="11" fill="#4f8fe8">Z</text>
      <text x="295" y="940" fontFamily="Liberation Sans" fontSize="11" fill="#e85060">X</text>
    </g>
  </Scene>
);

function Chev() {
  return <svg width="10" height="8" viewBox="0 0 10 8" fill="none" stroke="#555" strokeWidth="2"><path d="M1.5 2l3.5 3.5L8.5 2" /></svg>;
}

export default function App() {
  return (
    <Page>
      <Global />
      <TitleBar>
        <Logo>K</Logo>
        <TitleText>КОМПАС-3D V16 Home  (Не для коммерческого использования) - Деталь БЕЗ ИМЕНИ2</TitleText>
        <WinButtons>
          <WinBtn $w={26}><svg width="10" height="10" viewBox="0 0 10 10"><rect x="1" y="7" width="8" height="2" fill="#1f2a30" /></svg></WinBtn>
          <WinBtn $w={26}><svg width="12" height="12" viewBox="0 0 12 12" fill="none" stroke="#1f2a30" strokeWidth="1.4"><rect x="1" y="3.5" width="7" height="7" /><path d="M3.5 3V1h7.5v7h-2.5" /></svg></WinBtn>
          <WinBtn $w={45} $red><svg width="10" height="10" viewBox="0 0 10 10" stroke="#fff" strokeWidth="2"><path d="M1 1l8 8M9 1l-8 8" /></svg></WinBtn>
        </WinButtons>
      </TitleBar>
      <MenuBar>
        <Grip />
        <MenuItem $w={12} />
        {menu.map(([t, w], k) => <MenuItem key={k} $w={w}>{t}</MenuItem>)}
      </MenuBar>
      <ToolRow>
        <ToolBand $w={500}>
          <ToolSlot $w={2} $ml={4}><Grip /></ToolSlot>
          {flow([i("doc", 24), a(39), i("open", 56), i("save", 78), s(92), i("print", 110), a(127), s(136), i("preview", 153), a(169), s(179), i("cut", 194), i("copy", 217), i("paste", 238), s(252), i("brush", 267), i("list", 290), s(304), i("undo", 321), i("redo", 342), s(357), i("mgr", 371), i("lib", 394), i("fx", 416), s(431), i("num", 446), s(461), i("help", 475)], 6)}
          <EndHandle />
        </ToolBand>
        <ToolBand $w={557} $gap={1}>
          <ToolSlot $w={2} $ml={3}><Grip /></ToolSlot>
          {flow([i("zoomPage", 19), s(34), i("zoomBox", 51), s(66), i("zoomIn", 80)], 5)}
          <Combo $w={65} $ml={3}>0.8867<ComboBtn><Chev /></ComboBtn></Combo>
          {flow([s(163), i("rotate", 178), i("orient", 201), a(219), s(228), i("wire", 242), i("hidden", 265), i("thin", 286), i("solid", 308), { n: "shaded", x: 331, on: true, w: 22 }, s(346), { n: "lamp", x: 367.5, on: true, w: 35, drop: true }, s(389), i("lamp2", 397), a(414), s(423), i("ybox", 439), i("section", 463), a(479), s(489), { n: "shadow", x: 503, on: true, w: 22 }, s(519), i("crane", 534)], 158)}
          <EndHandle />
        </ToolBand>
      </ToolRow>
      <ToolRow>
        <ToolBand $w={526}>
          <ToolSlot $w={2} $ml={4}><Grip /></ToolSlot>
          {flow([{ n: "dims", x: 21, w: 20 }], 6)}
          <Combo $w={58} $ml={2}>1.0<ComboBtn><Chev /></ComboBtn></Combo>
          {flow([{ n: "snap", x: 105.5, on: true, w: 21 }, s(120), i("layers", 135)], 91)}
          <Combo $w={126} $ml={2}>Системный слой (0)<ComboBtn><Chev /></ComboBtn></Combo>
          {flow([s(278), i("sketch", 293), i("partG", 314), s(329), i("axes", 345), s(359), i("parts", 375)], 273)}
          <Combo $w={126} $ml={2}>Деталь (Тел-1)<ComboBtn><Chev /></ComboBtn></Combo>
          <EndHandle />
        </ToolBand>
        <ToolBand $w={217} $gap={1}>
          <ToolSlot $w={2} $ml={4}><Grip /></ToolSlot>
          {flow([i("striped", 23), a(40), s(48), i("blueBox", 66), a(82), s(91), i("grayOp", 106), a(125), s(134), i("green", 151), s(165), i("adim", 182), a(198)], 6)}
          <EndHandle />
        </ToolBand>
      </ToolRow>
      <Body>
        <SideBar>
          <SideBand>
            <SideGrip />
            {sideFlow()}
            <SideEnd />
          </SideBand>
        </SideBar>
        <Workspace>
          <TabBar>
            <TabEdge $ml={0}>
              <TabShape $w={176} $slant={25} $rs={14}>
                <TabIcon $ml={25} $mr={13}><Icon n="partBw" s={17} /></TabIcon>Деталь БЕЗ ИМЕНИ1
              </TabShape>
            </TabEdge>
            <TabEdge $ml={-14}>
              <TabShape $active $w={196} $slant={18} $rs={0}>
                <TabIcon $ml={22} $mr={11}><Icon n="partBw" s={17} /></TabIcon>Деталь БЕЗ ИМЕНИ2<TabClose>✕</TabClose>
              </TabShape>
            </TabEdge>
            <TabMenu />
          </TabBar>
          <Frame>
            <Panel>
              <PanelHead>
                Дерево модели
                <PanelHeadIcons>
                  <svg width="10" height="12" viewBox="0 0 10 12" fill="none" stroke="#111"><path d="M3 1h4v6H3zM1 7h8M5 7v4M6 1v6" /></svg>
                  <svg width="10" height="10" viewBox="0 0 10 10" stroke="#111" strokeWidth="1.6"><path d="M1 1l8 8M9 1L1 9" /></svg>
                </PanelHeadIcons>
              </PanelHead>
              <PanelTools>
                <ToolSlot $w={18} $ml={4}><Icon n="tree" s={18} /></ToolSlot>
                <ToolSlot $w={18} $ml={7}><Icon n="checks" s={18} /></ToolSlot>
                <ToolSlot $w={9} $ml={3}><DropArrow $c="#999" /></ToolSlot>
                <ToolSlot $w={1} $ml={3}><Sep /></ToolSlot>
                <ToolSlot $w={21} $ml={4} $on><Icon n="bookA" s={17} /></ToolSlot>
                <ToolSlot $w={18} $ml={3}><Icon n="bookB" s={17} /></ToolSlot>
              </PanelTools>
              <PanelBox>
                <TreeBox>
                  <TreeRow $pad={0}><Icon n="part" s={19} /><RootLabel>Деталь (Тел-1)</RootLabel></TreeRow>
                  <TreeRow $pad={23}><Dots $h={10} /><PlusAt><Icon n="plusBox" s={13} /></PlusAt><Icon n="axisTree" s={16} /><TreeLabel>(т)Начало координат</TreeLabel></TreeRow>
                  <TreeRow $pad={23}><Dots $h={30} /><Icon n="sketchG" s={16} /><TreeLabel>(-) Эскиз:1</TreeLabel></TreeRow>
                  <TreeRow $pad={23}><Dots $h={50} /><Icon n="revolve" s={16} /><TreeLabel>Операция вращения:1</TreeLabel></TreeRow>
                  <Rollback />
                </TreeBox>
                <InfoBox />
              </PanelBox>
              <PanelTabs>
                <PanelTab $on $w={68} $pl={4}>Построение</PanelTab>
                <PanelTab $w={72} $pl={8}>Исполнения</PanelTab>
                <PanelTab $w={50} $pl={13}>Зоны</PanelTab>
              </PanelTabs>
            </Panel>
            <Viewport><Model /></Viewport>
          </Frame>
        </Workspace>
      </Body>
      <Bottom>
        <Grip $h={54} />
        <CmdBox />
      </Bottom>
      <Status>
        <StatusText>Щелкните левой кнопкой мыши на объекте для его выделения (вместе с Ctrl - добавить к выделенным)</StatusText>
        <StatusCell />
      </Status>
    </Page>
  );
}
